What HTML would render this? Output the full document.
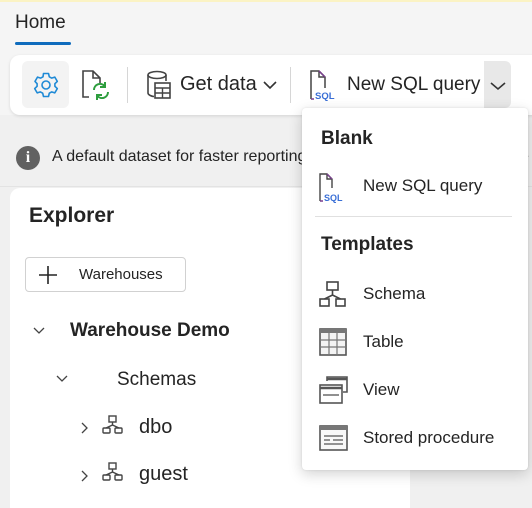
<!DOCTYPE html>
<html><head><meta charset="utf-8"><style>
*{box-sizing:border-box;margin:0;padding:0}
body{width:532px;height:492px;overflow:hidden;background:#f0f0f0;font-family:"Segoe UI","Liberation Sans",sans-serif;color:#242424;position:relative}
.abs{position:absolute}
.top{left:0;top:0;width:532px;height:115px;background:#f5f5f5;border-top:2px solid #fbf3c4}
.t{position:absolute;white-space:nowrap}
</style></head><body>
<div class="abs top"></div>
<div class="t" style="left:15px;top:12px;font-size:19px;color:#242424">Home</div>
<div class="abs" style="left:15px;top:42px;width:56px;height:3px;background:#0f6cbd;border-radius:2px"></div>
<!-- toolbar -->
<div class="abs" style="left:10px;top:55px;width:540px;height:60px;background:#fff;border-radius:10px;box-shadow:0 1px 3px rgba(0,0,0,.12)"></div>
<div class="abs" style="left:22px;top:61px;width:47px;height:47px;background:#f3f3f3;border-radius:6px"></div>
<svg class="abs" style="left:32px;top:71px" width="28" height="28" viewBox="0 0 28 28"><path d="M11.5 2.5h5l.8 3.3 2.3 1.3 3.2-1 2.5 4.3-2.4 2.3v2.6l2.4 2.3-2.5 4.3-3.2-1-2.3 1.3-.8 3.3h-5l-.8-3.3-2.3-1.3-3.2 1-2.5-4.3 2.4-2.3v-2.6L3 10.4l2.5-4.3 3.2 1 2.3-1.3z" fill="none" stroke="#1f8ad6" stroke-width="1.6" stroke-linejoin="round"/><circle cx="14" cy="14" r="4" fill="none" stroke="#1f8ad6" stroke-width="1.6"/></svg>
<svg class="abs" style="left:80px;top:68px" width="32" height="34" viewBox="0 0 32 34"><path d="M9 29H3V3h10l7 7v5M13 3v7h7" fill="none" stroke="#444" stroke-width="1.6"/><path d="M14 22a6 6 0 0 1 10.5-4M28 24a6 6 0 0 1-10.5 4" fill="none" stroke="#2e9e3e" stroke-width="2"/><path d="M25 14v5h-5M17 32v-5h5" fill="none" stroke="#2e9e3e" stroke-width="2"/></svg>
<div class="abs" style="left:127px;top:67px;width:1px;height:36px;background:#d6d6d6"></div>
<svg class="abs" style="left:145px;top:70px" width="30" height="30" viewBox="0 0 30 30"><ellipse cx="12" cy="5" rx="9" ry="3.5" fill="none" stroke="#444" stroke-width="1.6"/><path d="M3 5v18c0 2 4 3.5 6 3.5M21 5v6" fill="none" stroke="#444" stroke-width="1.6"/><rect x="10" y="13" width="15" height="15" fill="#fff" stroke="#444" stroke-width="1.6"/><path d="M10 18h15M10 23h15M17.5 18v10" stroke="#444" stroke-width="1.4"/></svg>
<div class="t" style="left:180px;top:73px;font-size:20px">Get data</div>
<svg class="abs" style="left:263px;top:80px" width="14" height="10"><path d="M1 2l6 6 6-6" fill="none" stroke="#333" stroke-width="1.6"/></svg>
<div class="abs" style="left:290px;top:67px;width:1px;height:36px;background:#d6d6d6"></div>
<svg class="abs" style="left:308px;top:69px" width="36" height="32" viewBox="0 0 36 32"><path d="M3 30V2h8l6 6v11M11 2v6h6" fill="none" stroke="#444" stroke-width="1.5"/><path d="M3 30h3" stroke="#7a3f8f" stroke-width="1.5"/><path d="M11 2l6 6" stroke="#7a3f8f" stroke-width="1.5"/><text x="7" y="30" font-family="Liberation Sans" font-size="9.5" font-weight="bold" fill="#3a6fd6">SQL</text></svg>
<div class="t" style="left:347px;top:74px;font-size:19px">New SQL query</div>
<div class="abs" style="left:484px;top:61px;width:27px;height:47px;background:#e8e8e8;border-radius:0 6px 6px 0"></div>
<svg class="abs" style="left:490px;top:81px" width="16" height="10"><path d="M1 2l7 6 7-6" fill="none" stroke="#333" stroke-width="1.6"/></svg>
<!-- info bar -->
<div class="abs" style="left:16px;top:146px;width:24px;height:24px;border-radius:50%;background:#616161;color:#fff;font-size:16px;font-weight:bold;text-align:center;line-height:24px;font-family:'Liberation Serif',serif">i</div>
<div class="t" style="left:52px;top:148px;font-size:16px">A default dataset for faster reporting</div>
<div class="t" style="left:520px;top:148px;font-size:16px">e</div>
<!-- explorer -->
<div class="abs" style="left:0;top:186px;width:532px;height:1px;background:#e3e3e3"></div>
<div class="abs" style="left:10px;top:188px;width:400px;height:320px;background:#fff;border-radius:10px 0 0 0"></div>
<div class="t" style="left:29px;top:204px;font-size:21px;font-weight:600">Explorer</div>
<div class="abs" style="left:25px;top:257px;width:161px;height:35px;border:1px solid #d1d1d1;border-radius:4px"></div>
<svg class="abs" style="left:38px;top:265px" width="20" height="20"><path d="M10 1v18M1 10h18" stroke="#242424" stroke-width="1.6"/></svg>
<div class="t" style="left:79px;top:266px;font-size:15px">Warehouses</div>
<svg class="abs" style="left:33px;top:327px" width="12" height="8"><path d="M1 1l5 5 5-5" fill="none" stroke="#444" stroke-width="1.3"/></svg>
<div class="t" style="left:70px;top:320px;font-size:19px;font-weight:600">Warehouse Demo</div>
<svg class="abs" style="left:56px;top:375px" width="12" height="8"><path d="M1 1l5 5 5-5" fill="none" stroke="#444" stroke-width="1.3"/></svg>
<div class="t" style="left:117px;top:369px;font-size:19px">Schemas</div>
<svg class="abs" style="left:81px;top:422px" width="8" height="12"><path d="M1 1l5 5-5 5" fill="none" stroke="#444" stroke-width="1.3"/></svg>
<svg class="abs" style="left:102px;top:415px" width="22" height="20" viewBox="0 0 22 20"><rect x="7" y="1" width="7" height="6" fill="none" stroke="#444" stroke-width="1.4"/><path d="M10.5 7v3M4 13l6.5-3 6.5 3" fill="none" stroke="#444" stroke-width="1.4"/><rect x="1" y="13" width="7" height="5" rx="1" fill="none" stroke="#444" stroke-width="1.4"/><rect x="13" y="13" width="7" height="5" rx="1" fill="none" stroke="#444" stroke-width="1.4"/></svg>
<div class="t" style="left:139px;top:416px;font-size:20px">dbo</div>
<svg class="abs" style="left:81px;top:470px" width="8" height="12"><path d="M1 1l5 5-5 5" fill="none" stroke="#444" stroke-width="1.3"/></svg>
<svg class="abs" style="left:102px;top:462px" width="22" height="20" viewBox="0 0 22 20"><rect x="7" y="1" width="7" height="6" fill="none" stroke="#444" stroke-width="1.4"/><path d="M10.5 7v3M4 13l6.5-3 6.5 3" fill="none" stroke="#444" stroke-width="1.4"/><rect x="1" y="13" width="7" height="5" rx="1" fill="none" stroke="#444" stroke-width="1.4"/><rect x="13" y="13" width="7" height="5" rx="1" fill="none" stroke="#444" stroke-width="1.4"/></svg>
<div class="t" style="left:139px;top:463px;font-size:20px">guest</div>
<!-- dropdown -->
<div class="abs" style="left:302px;top:108px;width:226px;height:362px;background:#fff;border-radius:4px;box-shadow:0 4px 14px rgba(0,0,0,.18),0 0 2px rgba(0,0,0,.1)"></div>
<div class="t" style="left:321px;top:128px;font-size:19px;font-weight:600">Blank</div>
<svg class="abs" style="left:318px;top:172px" width="30" height="32" viewBox="0 0 30 32"><path d="M2 29V2h7l5 5v9M9 2v5h5" fill="none" stroke="#444" stroke-width="1.4"/><path d="M2 29h3M9 2l5 5" stroke="#7a3f8f" stroke-width="1.4"/><text x="6" y="29" font-family="Liberation Sans" font-size="9" font-weight="bold" fill="#3a6fd6">SQL</text></svg>
<div class="t" style="left:363px;top:176px;font-size:17px">New SQL query</div>
<div class="abs" style="left:315px;top:216px;width:197px;height:1px;background:#e0e0e0"></div>
<div class="t" style="left:321px;top:234px;font-size:19px;font-weight:600">Templates</div>
<svg class="abs" style="left:319px;top:281px" width="28" height="27" viewBox="0 0 28 27"><rect x="8" y="1" width="11" height="8" fill="none" stroke="#444" stroke-width="1.6"/><path d="M13.5 9v5M5.5 18l8-4 8 4" fill="none" stroke="#444" stroke-width="1.6"/><rect x="1" y="18" width="9" height="7" fill="none" stroke="#444" stroke-width="1.6"/><rect x="17" y="18" width="9" height="7" fill="none" stroke="#444" stroke-width="1.6"/></svg>
<div class="t" style="left:363px;top:284px;font-size:17px">Schema</div>
<svg class="abs" style="left:319px;top:328px" width="28" height="28" viewBox="0 0 28 28"><rect x="1" y="1" width="26" height="26" fill="#f4f4f4" stroke="#555" stroke-width="1.6"/><rect x="1" y="1" width="26" height="4" fill="#777"/><path d="M1 12h26M1 19h26M10 5v22M18 5v22" stroke="#777" stroke-width="1.2"/></svg>
<div class="t" style="left:363px;top:332px;font-size:17px">Table</div>
<svg class="abs" style="left:319px;top:376px" width="29" height="29" viewBox="0 0 29 29"><path d="M8 5V1h20v15h-4" fill="none" stroke="#555" stroke-width="1.6"/><path d="M8 3h20" stroke="#555" stroke-width="2.5"/><rect x="1" y="9" width="22" height="18" fill="#fff" stroke="#555" stroke-width="1.6"/><path d="M1 12h22" stroke="#555" stroke-width="2.5"/><path d="M4 19h16" stroke="#555" stroke-width="1.3"/></svg>
<div class="t" style="left:363px;top:380px;font-size:17px">View</div>
<svg class="abs" style="left:319px;top:425px" width="29" height="26" viewBox="0 0 29 26"><rect x="1" y="1" width="27" height="24" fill="#f8f8f8" stroke="#555" stroke-width="1.6"/><rect x="1" y="1" width="27" height="4" fill="#777"/><path d="M5 11h19M5 15h6M14 15h10M5 19h19" stroke="#555" stroke-width="1.2"/></svg>
<div class="t" style="left:363px;top:428px;font-size:17px">Stored procedure</div>
</body></html>
